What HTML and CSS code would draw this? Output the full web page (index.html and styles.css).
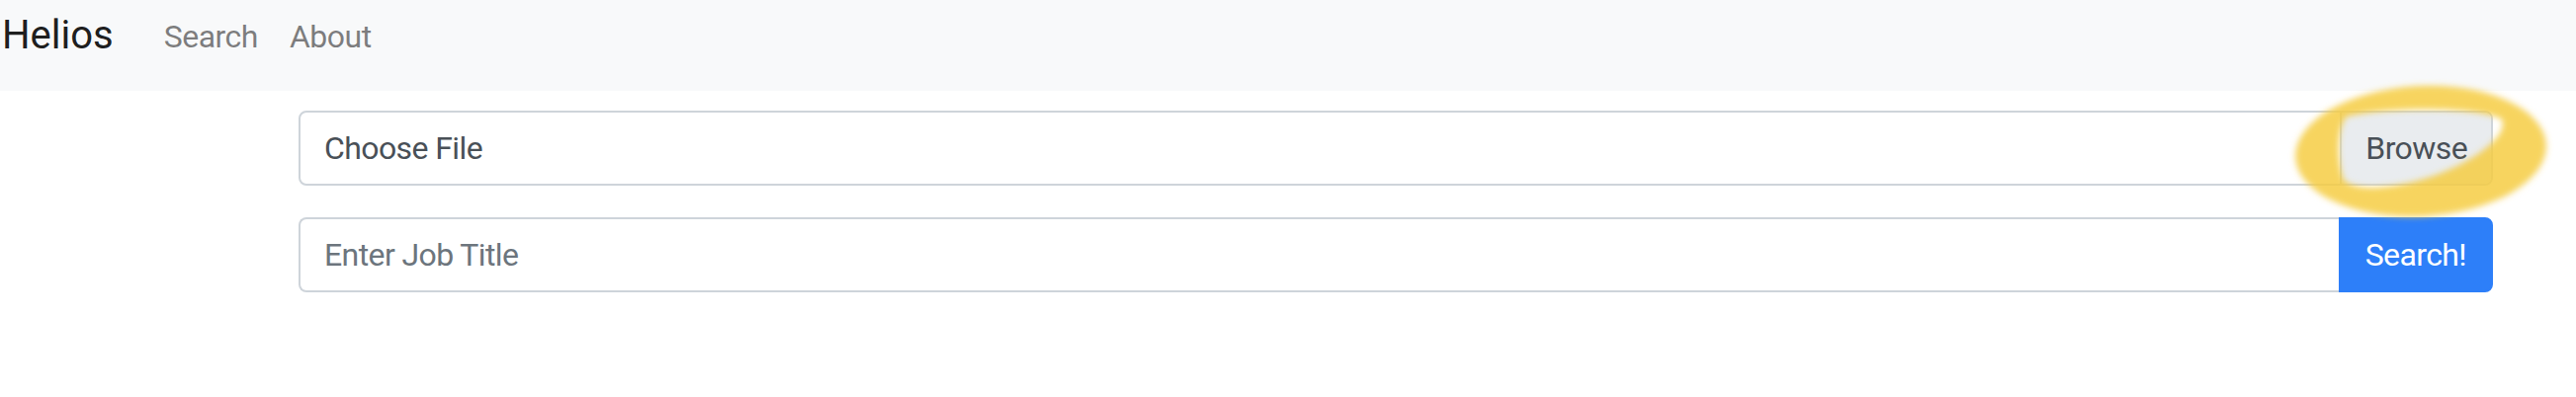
FILE: index.html
```html
<!DOCTYPE html>
<html lang="en">
<head>
<meta charset="utf-8">
<title>Helios</title>
<link rel="stylesheet" href="styles.css">
</head>
<body>
<nav class="navbar">
  <a class="brand" href="#">Helios</a>
  <ul class="nav">
    <li><a class="nav-link" href="#">Search</a></li>
    <li><a class="nav-link" href="#">About</a></li>
  </ul>
</nav>
<main class="content">
  <div class="input-group">
    <label class="file-label">
      <span class="file-text">Choose File</span>
      <span class="file-browse">Browse</span>
    </label>
  </div>
  <div class="input-group">
    <input class="form-control" type="text" placeholder="Enter Job Title">
    <button class="btn-primary" type="button">Search!</button>
  </div>
</main>
<svg class="highlight" width="2606" height="402" viewBox="0 0 2606 402" aria-hidden="true">
  <defs>
    <filter id="soft" x="-20%" y="-20%" width="140%" height="140%">
      <feGaussianBlur stdDeviation="3"/>
    </filter>
    <mask id="ring">
      <rect width="2606" height="402" fill="black"/>
      <ellipse cx="2449" cy="153" rx="127" ry="66" transform="rotate(-3 2449 153)" fill="white"/>
      <path d="M 2374 118 C 2420 108, 2500 108, 2530 120 C 2540 132, 2512 160, 2462 178 C 2420 192, 2382 194, 2371 182 C 2364 162, 2364 130, 2374 118 Z" fill="black"/>
    </mask>
  </defs>
  <g filter="url(#soft)">
    <rect width="2606" height="402" fill="#f5cc40" fill-opacity="0.84" mask="url(#ring)"/>
  </g>
</svg>
</body>
</html>
```
FILE: styles.css
```css
html, body {
  margin: 0;
  padding: 0;
  background: #ffffff;
}

body {
  position: relative;
  width: 2606px;
  height: 402px;
  overflow: hidden;
  font-family: Roboto, "Liberation Sans", Arial, sans-serif;
  color: #212529;
}

.navbar {
  display: flex;
  align-items: flex-start;
  height: 92px;
  box-sizing: border-box;
  padding: 6px 0 0 2px;
  background: #f8f9fa;
}

.brand {
  font-size: 40px;
  line-height: 60px;
  color: rgba(0, 0, 0, 0.9);
  text-decoration: none;
  margin-right: 35px;
}

.nav {
  display: flex;
  list-style: none;
  margin: 0;
  padding: 0;
}

.nav-link {
  display: block;
  padding: 7px 16px 0;
  font-size: 32px;
  line-height: 48px;
  color: rgba(0, 0, 0, 0.5);
  text-decoration: none;
  letter-spacing: -0.5px;
}

.content {
  display: flex;
  flex-direction: column;
  gap: 32px;
  width: 2220px;
  margin: 20px 0 0 302px;
}

.input-group {
  display: flex;
  height: 76px;
}

.file-label {
  flex: 1;
  display: flex;
  box-sizing: border-box;
  height: 76px;
  border: 2px solid #ced4da;
  border-radius: 8px;
  overflow: hidden;
  font-size: 32px;
  line-height: 48px;
  color: #495057;
  letter-spacing: -0.6px;
}

.file-text {
  flex: 1;
  padding: 12px 24px;
}

.file-browse {
  padding: 12px 24px;
  background: #e9ecef;
  border-left: 2px solid #ced4da;
}

.form-control {
  flex: 1;
  box-sizing: border-box;
  height: 76px;
  margin: 0;
  padding: 12px 24px;
  border: 2px solid #ced4da;
  border-right: none;
  border-radius: 8px 0 0 8px;
  font-family: inherit;
  font-size: 32px;
  line-height: 48px;
  color: #495057;
  letter-spacing: -0.6px;
  outline: none;
}

.form-control::placeholder {
  color: #6c757d;
  opacity: 1;
}

.btn-primary {
  box-sizing: border-box;
  height: 76px;
  margin: 0;
  padding: 12px 25px;
  border: 2px solid #2d7ff9;
  border-radius: 0 8px 8px 0;
  background: #2d7ff9;
  color: #ffffff;
  font-family: inherit;
  font-size: 32px;
  line-height: 48px;
  letter-spacing: -0.6px;
}

.highlight {
  position: absolute;
  top: 0;
  left: 0;
  pointer-events: none;
}
```
